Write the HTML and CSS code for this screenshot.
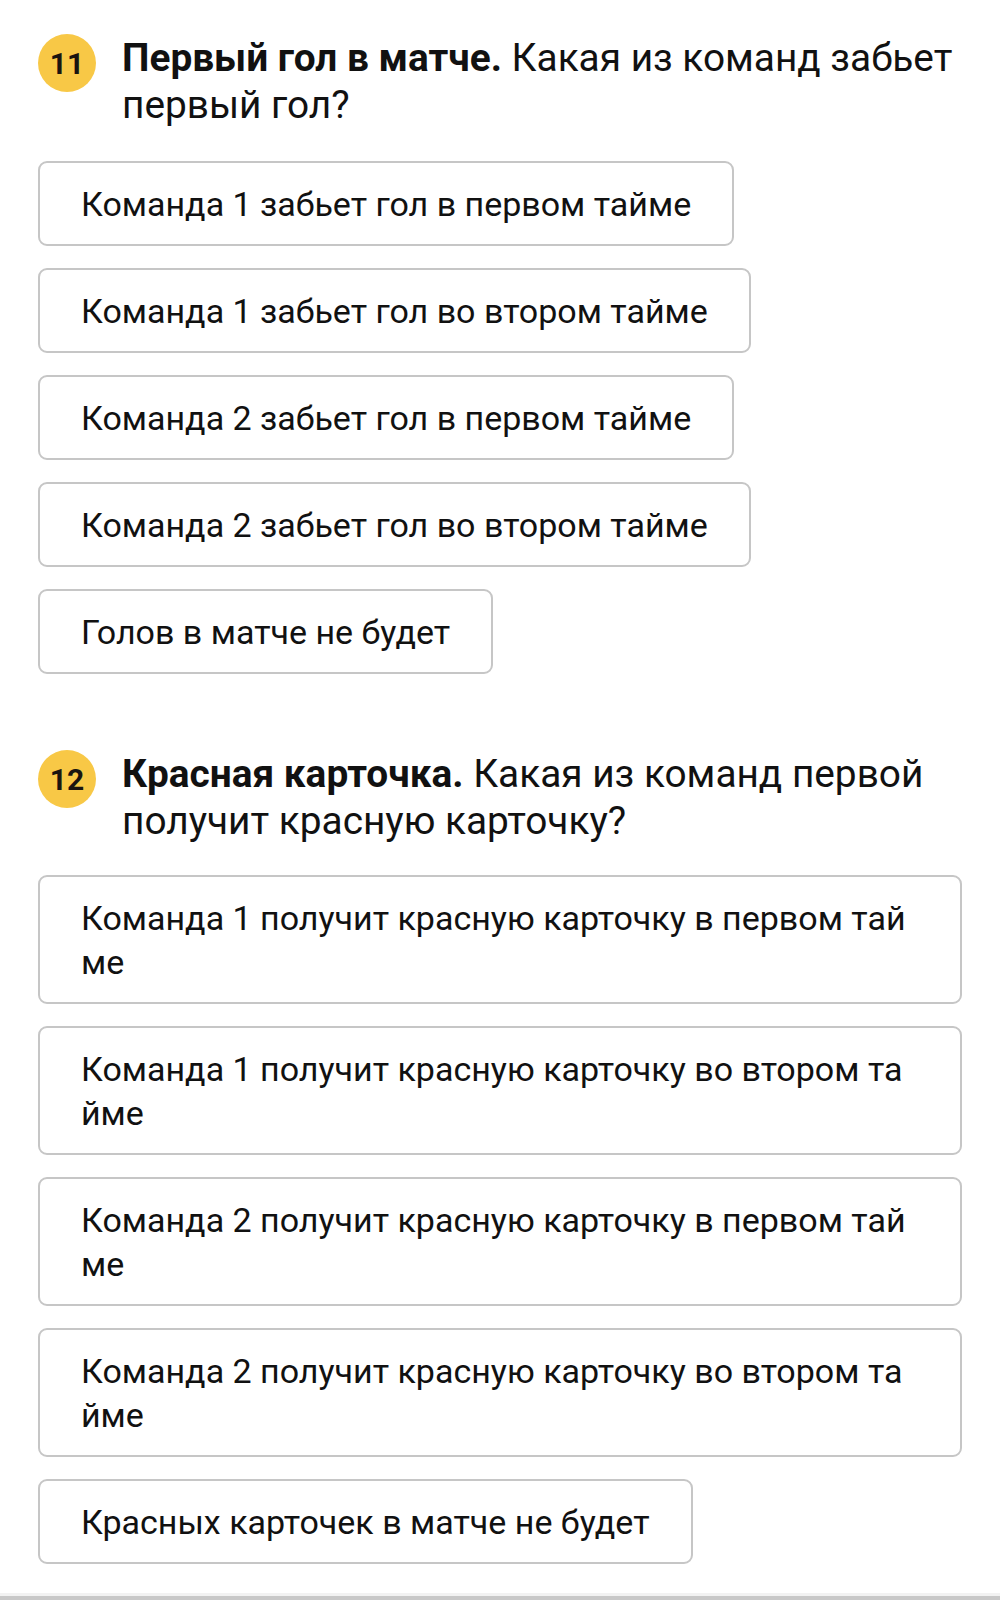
FILE: index.html
```html
<!DOCTYPE html>
<html lang="ru">
<head>
<meta charset="utf-8">
<title>Вопросы</title>
<link rel="stylesheet" href="styles.css">
</head>
<body>
<div class="page">
  <section class="question">
    <div class="q-head">
      <div class="badge">11</div>
      <h2 class="q-title"><b>Первый гол в матче.</b> Какая из команд забьет первый гол?</h2>
    </div>
    <div class="options">
      <div class="option">Команда 1 забьет гол в первом тайме</div>
      <div class="option">Команда 1 забьет гол во втором тайме</div>
      <div class="option">Команда 2 забьет гол в первом тайме</div>
      <div class="option">Команда 2 забьет гол во втором тайме</div>
      <div class="option">Голов в матче не будет</div>
    </div>
  </section>
  <section class="question second">
    <div class="q-head">
      <div class="badge">12</div>
      <h2 class="q-title"><b>Красная карточка.</b> Какая из команд первой получит красную карточку?</h2>
    </div>
    <div class="options">
      <div class="option">Команда 1 получит красную карточку в первом тайме</div>
      <div class="option">Команда 1 получит красную карточку во втором тайме</div>
      <div class="option">Команда 2 получит красную карточку в первом тайме</div>
      <div class="option">Команда 2 получит красную карточку во втором тайме</div>
      <div class="option">Красных карточек в матче не будет</div>
    </div>
  </section>
  <div class="bottom-bar"></div>
</div>
</body>
</html>
```
FILE: styles.css
```css
html, body {
  margin: 0;
  padding: 0;
  background: #ffffff;
}
body {
  font-family: Roboto, "Noto Sans", sans-serif;
  color: #111111;
}
.page {
  padding: 34px 38px 0 38px;
  min-height: 1600px;
  box-sizing: border-box;
  display: flex;
  flex-direction: column;
}
.question.second {
  margin-top: 76px;
}
.q-head {
  display: flex;
  align-items: flex-start;
  gap: 26px;
}
.badge {
  flex: 0 0 58px;
  width: 58px;
  height: 58px;
  border-radius: 50%;
  background: #f8c846;
  display: flex;
  align-items: center;
  justify-content: center;
  font-weight: 700;
  font-size: 30px;
  color: #1a1410;
}
.q-title {
  margin: 0;
  font-size: 38.8px;
  line-height: 47px;
  font-weight: 400;
  color: #111111;
}
.q-title b {
  font-weight: 700;
}
.options {
  margin-top: 33px;
  display: flex;
  flex-direction: column;
  align-items: flex-start;
  gap: 22px;
}
.second .options {
  margin-top: 31px;
}
.option {
  box-sizing: border-box;
  max-width: 924px;
  border: 2px solid #c6c6c6;
  border-radius: 9px;
  padding: 18.5px 41px;
  font-size: 34px;
  line-height: 44px;
  color: #111111;
  word-break: break-all;
}
.bottom-bar {
  margin-top: auto;
  height: 4px;
  margin-left: -38px;
  margin-right: -38px;
  background: #c8c8c8;
  box-shadow: 0 -3px 0 #f2f2f2;
}
```
